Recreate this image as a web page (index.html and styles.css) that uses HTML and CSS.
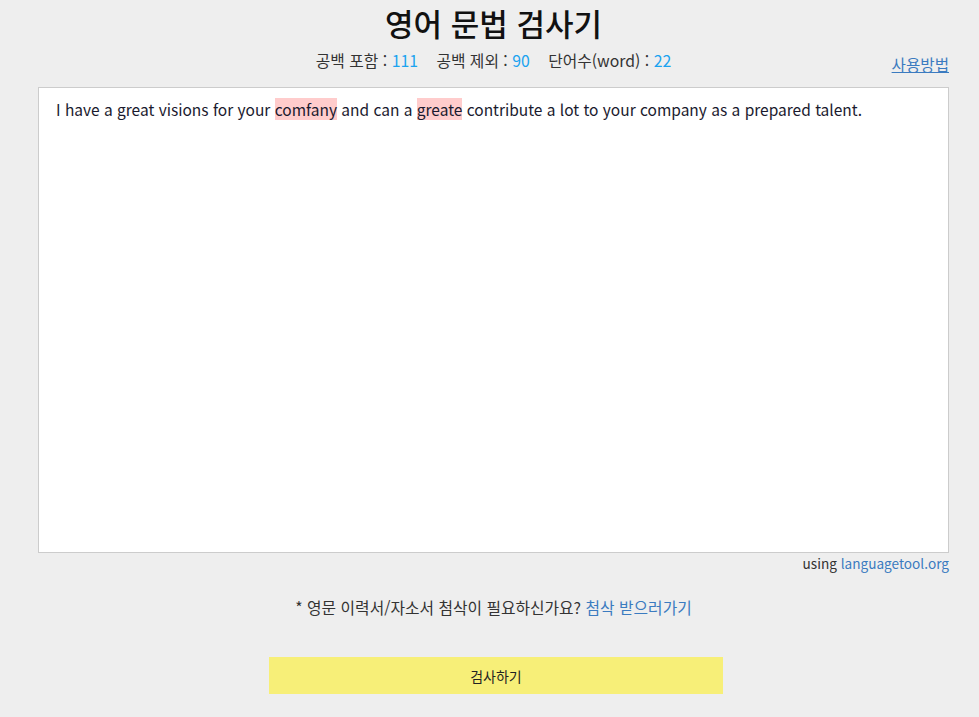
FILE: index.html
```html
<!DOCTYPE html>
<html lang="ko">
<head>
<meta charset="utf-8">
<link rel="stylesheet" href="styles.css">
</head>
<body>
<div class="wrap">
  <h1 class="title">영어 문법 검사기</h1>
  <div class="statsrow">
    <div class="stats">
      <span>공백 포함 : <b class="num">111</b></span>
      <span>공백 제외 : <b class="num">90</b></span>
      <span>단어수(word) : <b class="num">22</b></span>
    </div>
    <a class="howto" href="#">사용방법</a>
  </div>
  <div class="editor">I have a great visions for your <span class="err">comfany</span> and can a <span class="err">greate</span> contribute a lot to your company as a prepared talent.</div>
  <div class="credit">using <a href="#">languagetool.org</a></div>
  <p class="promo">* 영문 이력서/자소서 첨삭이 필요하신가요? <a href="#">첨삭 받으러가기</a></p>
  <div class="btnrow"><button class="check">검사하기</button></div>
</div>
</body>
</html>
```
FILE: styles.css
```css
html, body {
  margin: 0;
  padding: 0;
  background: #eeeeee;
}
body {
  font-family: "Noto Sans CJK KR", "Noto Sans", sans-serif;
  color: #222;
}
.wrap {
  width: 911px;
  margin-left: 38px;
}
.title {
  margin: 0;
  height: 45px;
  line-height: 45px;
  text-align: center;
  font-size: 31px;
  font-weight: 500;
  color: #111;
}
.statsrow {
  position: relative;
  height: 42px;
}
.stats {
  text-align: center;
  font-size: 15.8px;
  line-height: 20px;
  padding-top: 6px;
  color: #333;
}
.stats span {
  margin: 0 7px;
}
.num {
  font-weight: 400;
  color: #1aa3f0;
}
.howto {
  position: absolute;
  right: 0;
  top: 9px;
  font-size: 15.6px;
  line-height: 20px;
  color: #3b7bc0;
  text-decoration: underline;
}
.editor {
  background: #fff;
  border: 1px solid #cccccc;
  height: 436px;
  padding: 10px 17px 18px 17px;
  font-size: 15.5px;
  line-height: 22px;
  color: #1a1a2e;
}
.err {
  background: #ffcccc;
}
.credit {
  text-align: right;
  font-size: 13.6px;
  line-height: 20px;
  padding-top: 0px;
  color: #333;
}
.credit a {
  color: #3b7bc0;
  text-decoration: none;
}
.promo {
  text-align: center;
  margin: 0;
  padding-top: 24px;
  font-size: 15.8px;
  line-height: 22px;
  color: #333;
}
.promo a {
  color: #3b7bc0;
  text-decoration: none;
}
.btnrow {
  padding-top: 38px;
  padding-left: 231px;
}
.check {
  display: block;
  width: 454px;
  height: 37px;
  border: 0;
  background: #f7ef78;
  font-family: "Noto Sans CJK KR", sans-serif;
  font-size: 14px;
  color: #222;
}
```
